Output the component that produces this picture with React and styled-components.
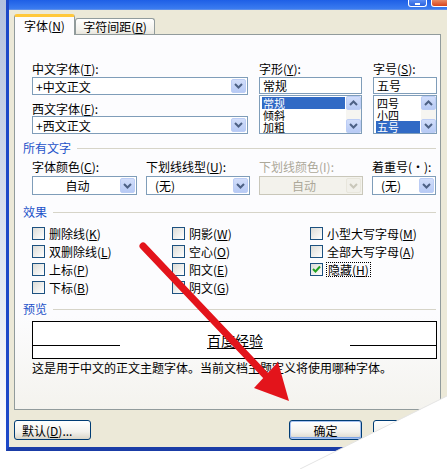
import React from 'react';
import styled, { createGlobalStyle, css } from 'styled-components';

const GlobalStyle = createGlobalStyle`
  html, body { margin: 0; padding: 0; background: #fff; }
  body {
    font-family: "Noto Sans CJK SC", "Liberation Sans", sans-serif;
    font-size: 12px;
    color: #000;
  }
  * { box-sizing: border-box; }
`;

const Screen = styled.div`
  position: relative;
  width: 447px;
  height: 469px;
  overflow: hidden;
  background: #fff;
  display: flex;
  align-items: flex-start;
`;

const LeftStrip = styled.div`
  flex: none;
  width: 6px;
  height: 452px;
  background: linear-gradient(#b3c1de, #dde4f1 55%, #fff);
`;

const Window = styled.div`
  flex: none;
  width: 450px;
  height: 451px;
  border-left: 3px solid #1c48c8;
  border-bottom: 4px solid #1a3ca6;
  background: #ece9d8;
  display: flex;
  flex-direction: column;
`;

const TitleBar = styled.div`
  flex: none;
  height: 10px;
  background: linear-gradient(#1e5fe6, #3b7cf0);
  border-bottom: 1px solid #5d8ee8;
  display: flex;
  align-items: flex-start;
  gap: 4px;
  padding-left: 399px;
`;

const TitleButton = styled.div`
  width: ${p => (p.$close ? 22 : 19)}px;
  height: 7px;
  border: 1px solid #fff;
  border-top: none;
  border-radius: 0 0 3px 3px;
  background: ${p => (p.$close ? 'linear-gradient(#e98a63, #d8441c)' : 'linear-gradient(#5a8cf3, #2a62de)')};
  display: flex;
  justify-content: center;
  align-items: flex-end;
  &::after {
    content: '';
    width: 5px;
    height: 2px;
    margin-bottom: 1px;
    background: ${p => (p.$close ? 'transparent' : '#fff')};
  }
`;

const Body = styled.div`
  flex: 1;
  padding: 4px 0 0 5px;
  display: flex;
  flex-direction: column;
`;

const Tabs = styled.div`
  display: flex;
  align-items: flex-end;
  height: 21px;
  margin-bottom: -1px;
  position: relative;
  z-index: 1;
`;

const Tab = styled.div`
  display: flex;
  align-items: center;
  justify-content: center;
  border: 1px solid #919b9c;
  border-bottom: none;
  border-radius: 3px 3px 0 0;
  ${p =>
    p.$active
      ? css`
          width: 61px;
          height: 21px;
          border-top: 3px solid #ffc83c;
          background: #fcfcfe;
          padding-bottom: 1px;
        `
      : css`
          width: 80px;
          height: 16px;
          margin-bottom: 1px;
          background: linear-gradient(#fff, #f3f2ed 70%, #e7e5dc);
        `}
`;

const Panel = styled.div`
  width: 427px;
  height: 376px;
  border: 1px solid #919b9c;
  background: linear-gradient(#fcfcfe 75%, #f4f3ee);
  padding: 27px 0 0 8px;
  display: flex;
  flex-direction: column;
`;

const Indent = styled.div`
  margin-left: 9px;
`;

const FontGrid = styled(Indent)`
  display: grid;
  grid-template-columns: 216px 103px 64px;
  column-gap: 11px;
`;

const Column = styled.div`
  display: flex;
  flex-direction: column;
`;

const FieldLabel = styled.div`
  height: ${p => p.$h || 15}px;
  display: flex;
  align-items: ${p => (p.$bottom ? 'flex-end' : 'flex-start')};
  line-height: 14px;
  white-space: nowrap;
  color: ${p => (p.$disabled ? '#aca899' : '#000')};
`;

const Hot = styled.span`
  text-decoration: underline;
`;

const Combo = styled.div`
  height: ${p => p.$h || 18}px;
  margin-top: ${p => p.$mt || 0}px;
  border: 1px solid ${p => (p.$disabled ? '#c9c7ba' : '#7f9db9')};
  background: ${p => (p.$disabled ? '#f3f2ec' : '#fff')};
  display: flex;
  align-items: stretch;
`;

const ComboText = styled.div`
  flex: 1;
  display: flex;
  align-items: center;
  justify-content: ${p => (p.$center ? 'center' : 'flex-start')};
  padding-left: ${p => (p.$pad != null ? p.$pad : 3)}px;
  color: ${p => (p.$disabled ? '#aca899' : '#000')};
  white-space: nowrap;
`;

const ArrowButton = styled.div`
  width: 15px;
  flex: none;
  margin: 1px;
  border: 1px solid ${p => (p.$disabled ? '#e8e6dc' : '#bccdf5')};
  border-radius: 2px;
  background: ${p => (p.$disabled ? '#f1f0ea' : 'linear-gradient(#d2defa, #b7caf5)')};
  display: flex;
  align-items: center;
  justify-content: center;
`;

const TextBox = styled.div`
  height: 17px;
  border: 1px solid #7f9db9;
  background: #fff;
  padding-left: 3px;
  display: flex;
  align-items: center;
`;

const ListBox = styled.div`
  height: 39px;
  margin-top: 1px;
  border: 1px solid #7f9db9;
  background: #fff;
  display: flex;
`;

const ListItems = styled.div`
  flex: 1;
  padding: 1px 1px 0 2px;
  display: flex;
  flex-direction: column;
`;

const ListItem = styled.div`
  height: 12px;
  line-height: 12px;
  font-size: 11px;
  padding-left: 1px;
  background: ${p => (p.$selected ? '#316ac5' : 'transparent')};
  color: ${p => (p.$selected ? '#fff' : '#000')};
`;

const ScrollBar = styled.div`
  width: 15px;
  display: flex;
  flex-direction: column;
  background: #f6f5f1;
`;

const ScrollButton = styled(ArrowButton)`
  width: auto;
  height: 14px;
  margin: 0;
`;

const ScrollTrack = styled.div`
  flex: 1;
`;

const GroupHead = styled.div`
  height: 14px;
  margin-top: ${p => p.$mt}px;
  display: flex;
  align-items: center;
  gap: 6px;
  color: #1d52c9;
  line-height: 14px;
  &::after {
    content: '';
    flex: 1;
    height: 1px;
    margin-right: 4px;
    background: #d6d4c8;
  }
`;

const FormatGrid = styled(Indent)`
  display: grid;
  grid-template-columns: 105px 104px 104px 64px;
  column-gap: 9px;
  margin-top: 5px;
`;

const CheckGrid = styled(Indent)`
  display: grid;
  grid-template-columns: 140px 138px auto;
  grid-auto-rows: 18px;
  margin-top: 5px;
`;

const CheckItem = styled.div`
  display: flex;
  align-items: center;
  gap: 4px;
  white-space: nowrap;
`;

const Box = styled.div`
  width: 13px;
  height: 13px;
  flex: none;
  border: 1px solid #1c5180;
  background: linear-gradient(135deg, #dcdcd7, #fff);
  display: flex;
  align-items: center;
  justify-content: center;
`;

const Focus = styled.span`
  outline: 1px dotted #000;
  padding: 0 1px;
  line-height: 13px;
`;

const PreviewBox = styled(Indent)`
  width: 405px;
  height: 38px;
  margin-top: 5px;
  border: 1px solid #000;
  background: #fff;
  display: grid;
  grid-template-columns: 87px 1fr 86px;
  align-items: center;
`;

const PreviewLine = styled.div`
  height: 1px;
  margin-top: 10px;
  background: #000;
`;

const PreviewText = styled.div`
  text-align: center;
  font-size: 14px;
  line-height: 16px;
  text-decoration: underline;
  text-underline-offset: 2px;
`;

const Note = styled(Indent)`
  margin-top: 2px;
  line-height: 14px;
  white-space: nowrap;
`;

const ButtonRow = styled.div`
  display: flex;
  margin-top: 10px;
  height: 20px;
`;

const Button = styled.div`
  width: ${p => p.$w}px;
  margin-left: ${p => p.$ml || 0}px;
  height: 20px;
  border: 1px solid #003c74;
  border-radius: 3px;
  background: linear-gradient(#fff, #f3f2ed 60%, #d9d5c9);
  display: flex;
  align-items: center;
  justify-content: ${p => (p.$left ? 'flex-start' : 'center')};
  padding-left: ${p => (p.$left ? 7 : 0)}px;
  white-space: nowrap;
  ${p =>
    p.$default &&
    css`
      box-shadow: inset 0 0 0 1px #a6c1ef, inset 0 -1px 0 1px #7fa5e6;
    `}
`;

const Overlay = styled.svg`
  position: absolute;
  left: 0;
  top: 0;
  pointer-events: none;
`;

function Chevron({ up, color = '#4d6185' }) {
  return (
    <svg width="9" height="6" viewBox="0 0 9 6" style={up ? { transform: 'rotate(180deg)' } : undefined}>
      <path d="M1 1 L4.5 4.5 L8 1" fill="none" stroke={color} strokeWidth="2" />
    </svg>
  );
}

function Select({ text, center, pad, disabled, mt }) {
  return (
    <Combo $disabled={disabled} $mt={mt} $h={19}>
      <ComboText $center={center} $pad={pad} $disabled={disabled}>{text}</ComboText>
      <ArrowButton $disabled={disabled}>
        <Chevron color={disabled ? '#c9c7ba' : '#4d6185'} />
      </ArrowButton>
    </Combo>
  );
}

function List({ items, selected }) {
  return (
    <ListBox>
      <ListItems>
        {items.map(it => (
          <ListItem key={it} $selected={it === selected}>{it}</ListItem>
        ))}
      </ListItems>
      <ScrollBar>
        <ScrollButton><Chevron up /></ScrollButton>
        <ScrollTrack />
        <ScrollButton><Chevron /></ScrollButton>
      </ScrollBar>
    </ListBox>
  );
}

function Check({ label, hot, checked, focus }) {
  const text = (
    <>
      {label}(<Hot>{hot}</Hot>)
    </>
  );
  return (
    <CheckItem>
      <Box>
        {checked && (
          <svg width="9" height="8" viewBox="0 0 9 8">
            <path d="M1 4 L3.5 6.5 L8 1.5" fill="none" stroke="#21a121" strokeWidth="2" />
          </svg>
        )}
      </Box>
      {focus ? <Focus>{text}</Focus> : <span>{text}</span>}
    </CheckItem>
  );
}

const effects = [
  ['删除线', 'K'], ['阴影', 'W'], ['小型大写字母', 'M'],
  ['双删除线', 'L'], ['空心', 'O'], ['全部大写字母', 'A'],
  ['上标', 'P'], ['阳文', 'E'], ['隐藏', 'H', true],
  ['下标', 'B'], ['阴文', 'G'], null,
];

export default function App() {
  return (
    <>
      <GlobalStyle />
      <Screen>
        <LeftStrip />
        <Window>
          <TitleBar>
            <TitleButton />
            <TitleButton $close />
          </TitleBar>
          <Body>
            <Tabs>
              <Tab $active>字体(<Hot>N</Hot>)</Tab>
              <Tab>字符间距(<Hot>R</Hot>)</Tab>
            </Tabs>
            <Panel>
              <FontGrid>
                <Column>
                  <FieldLabel>中文字体(<Hot>T</Hot>):</FieldLabel>
                  <Combo>
                    <ComboText>+中文正文</ComboText>
                    <ArrowButton><Chevron /></ArrowButton>
                  </Combo>
                  <FieldLabel $h={21} $bottom>西文字体(<Hot>F</Hot>):</FieldLabel>
                  <Combo>
                    <ComboText>+西文正文</ComboText>
                    <ArrowButton><Chevron /></ArrowButton>
                  </Combo>
                </Column>
                <Column>
                  <FieldLabel>字形(<Hot>Y</Hot>):</FieldLabel>
                  <TextBox>常规</TextBox>
                  <List items={['常规', '倾斜', '加粗']} selected="常规" />
                </Column>
                <Column>
                  <FieldLabel>字号(<Hot>S</Hot>):</FieldLabel>
                  <TextBox>五号</TextBox>
                  <List items={['四号', '小四', '五号']} selected="五号" />
                </Column>
              </FontGrid>

              <GroupHead $mt={7}>所有文字</GroupHead>
              <FormatGrid>
                <FieldLabel $h={14}>字体颜色(<Hot>C</Hot>):</FieldLabel>
                <FieldLabel $h={14}>下划线线型(<Hot>U</Hot>):</FieldLabel>
                <FieldLabel $h={14} $disabled>下划线颜色(I):</FieldLabel>
                <FieldLabel $h={14}>着重号(·):</FieldLabel>
                <Select text="自动" center mt={2} />
                <Select text="(无)" pad={8} mt={2} />
                <Select text="自动" center disabled mt={2} />
                <Select text="(无)" pad={8} mt={2} />
              </FormatGrid>

              <GroupHead $mt={10}>效果</GroupHead>
              <CheckGrid>
                {effects.map((e, i) =>
                  e ? (
                    <Check key={i} label={e[0]} hot={e[1]} checked={e[2]} focus={e[2]} />
                  ) : (
                    <span key={i} />
                  )
                )}
              </CheckGrid>

              <GroupHead $mt={6}>预览</GroupHead>
              <PreviewBox>
                <PreviewLine />
                <PreviewText>百度经验</PreviewText>
                <PreviewLine />
              </PreviewBox>
              <Note>这是用于中文的正文主题字体。当前文档主题定义将使用哪种字体。</Note>
            </Panel>
            <ButtonRow>
              <Button $w={77} $left>默认(<Hot>D</Hot>)...</Button>
              <Button $w={73} $ml={198} $default>确定</Button>
              <Button $w={73} $ml={11}>取消</Button>
            </ButtonRow>
          </Body>
        </Window>

        <Overlay width="447" height="469" viewBox="0 0 447 469">
          <polygon points="447,396 447,469 300,469" fill="#fff" />
          <line x1="447" y1="396" x2="300" y2="469" stroke="#e4e4e4" strokeWidth="1" />
          <line x1="143" y1="246" x2="268" y2="378" stroke="#e3141b" strokeWidth="7" strokeLinecap="round" />
          <polygon points="289,401 254,388 278,362" fill="#e3141b" />
        </Overlay>
      </Screen>
    </>
  );
}
